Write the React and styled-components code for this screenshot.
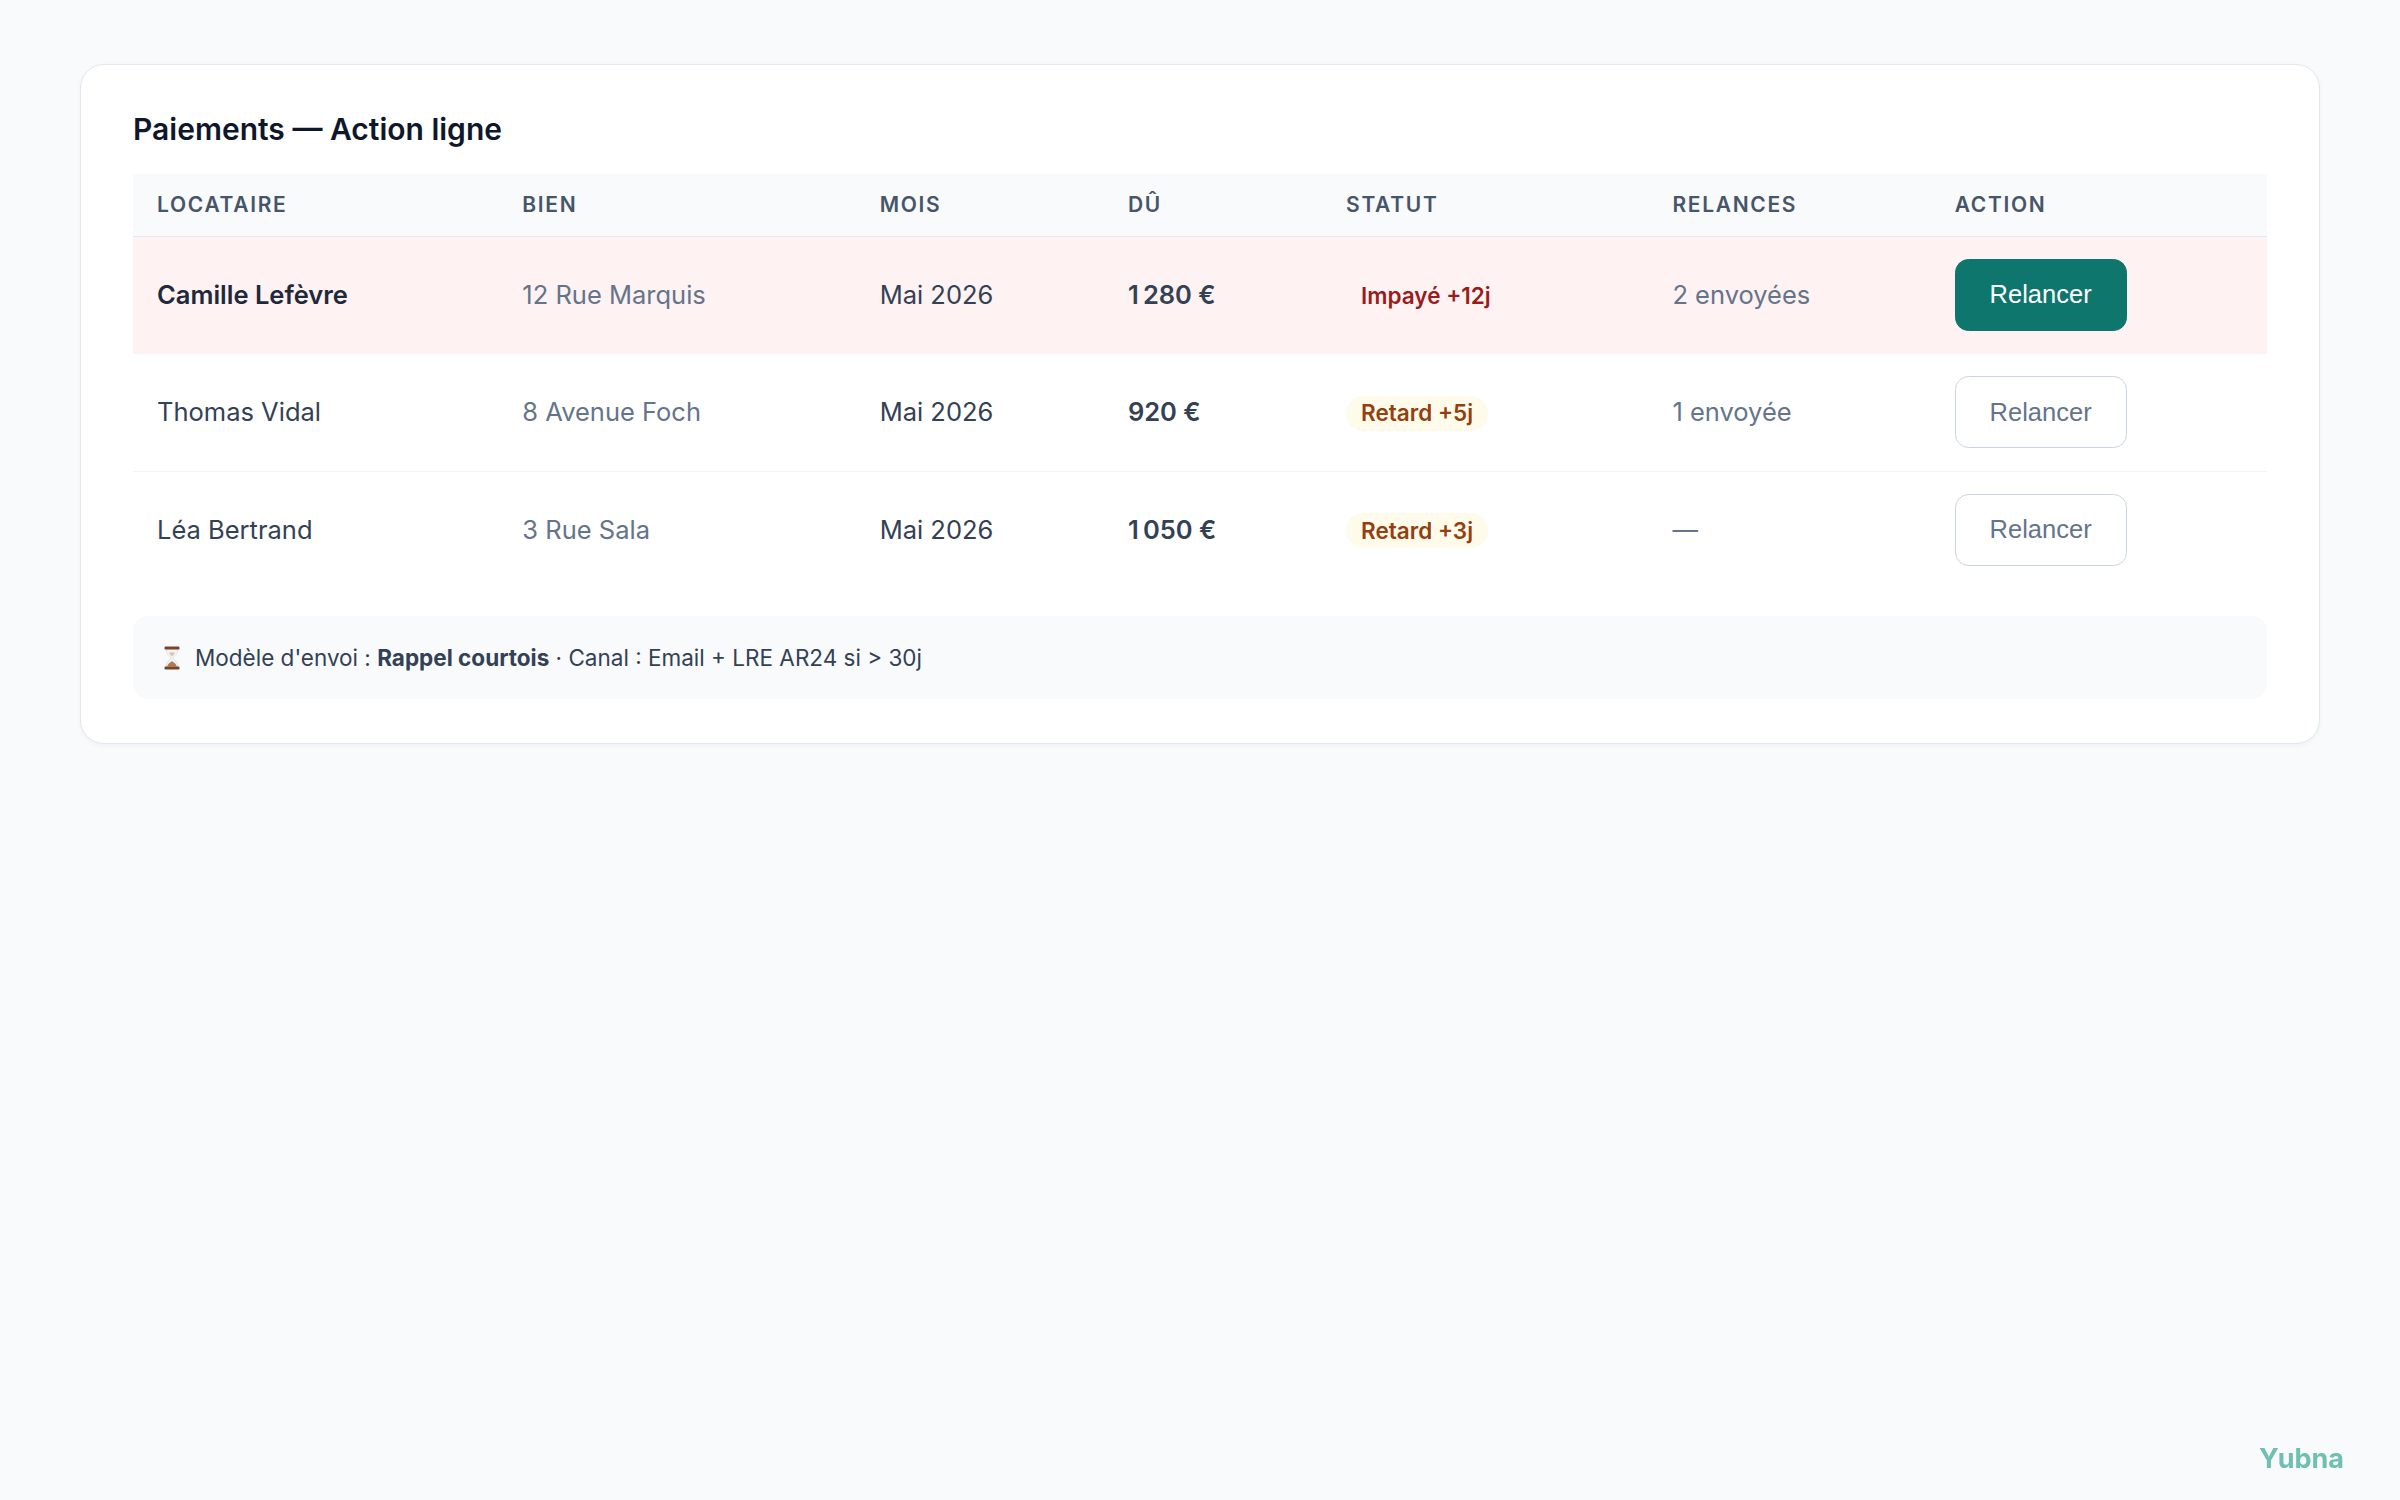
import styled, { createGlobalStyle } from "styled-components";

const GlobalStyle = createGlobalStyle`
  html, body {
    margin: 0;
    background: #f8fafc;
  }
  body {
    font-family: Inter, "Noto Sans", "Liberation Sans", sans-serif;
    color: #334155;
    min-height: 1500px;
  }
`;

const columns = [365, 357, 248, 218, 326, 282, 336];
const headers = ["Locataire", "Bien", "Mois", "Dû", "Statut", "Relances", "Action"];

const payments = [
  {
    tenant: "Camille Lefèvre",
    property: "12 Rue Marquis",
    month: "Mai 2026",
    due: "1\u202f280\u00a0€",
    status: "Impayé +12j",
    tone: "danger",
    reminders: "2 envoyées",
  },
  {
    tenant: "Thomas Vidal",
    property: "8 Avenue Foch",
    month: "Mai 2026",
    due: "920\u00a0€",
    status: "Retard +5j",
    tone: "warning",
    reminders: "1 envoyée",
  },
  {
    tenant: "Léa Bertrand",
    property: "3 Rue Sala",
    month: "Mai 2026",
    due: "1\u202f050\u00a0€",
    status: "Retard +3j",
    tone: "warning",
    reminders: "—",
  },
];

function Hourglass() {
  return (
    <svg width="18" height="24" viewBox="0 0 18 24" aria-hidden="true">
      <path d="M3 3 C3 9 8 10 8 12 C8 14 3 15 3 21 L15 21 C15 15 10 14 10 12 C10 10 15 9 15 3 Z" fill="#f4f4f5" stroke="#d4d4d8" strokeWidth="0.6" />
      <path d="M4.2 20.6 C5 17 8 16.4 9 15 C10 16.4 13 17 13.8 20.6 Z" fill="#b07a50" />
      <path d="M6 6.5 L12 6.5 C11 8.5 9.6 9.6 9 10.4 C8.4 9.6 7 8.5 6 6.5 Z" fill="#c99468" opacity="0.55" />
      <rect x="1.5" y="0.5" width="15" height="3" rx="1.2" fill="#7a4526" />
      <rect x="1.5" y="20.5" width="15" height="3" rx="1.2" fill="#7a4526" />
    </svg>
  );
}

export default function App() {
  return (
    <Page>
      <GlobalStyle />
      <Card>
        <Title>Paiements — Action ligne</Title>
        <Table>
          <colgroup>
            {columns.map((w, i) => (
              <col key={i} style={{ width: w }} />
            ))}
          </colgroup>
          <thead>
            <tr>
              {headers.map((h) => (
                <Th key={h}>{h}</Th>
              ))}
            </tr>
          </thead>
          <tbody>
            {payments.map((p, i) => {
              const alert = p.tone === "danger";
              return (
                <Row key={p.tenant} $alert={alert} $last={i === payments.length - 1}>
                  <Td $strong={alert} $color={alert ? "#1e293b" : "#334155"}>
                    {p.tenant}
                  </Td>
                  <Td $color="#64748b">{p.property}</Td>
                  <Td>{p.month}</Td>
                  <Td $strong>{p.due}</Td>
                  <Td>
                    <Badge $tone={p.tone}>{p.status}</Badge>
                  </Td>
                  <Td $color="#64748b">{p.reminders}</Td>
                  <Td>
                    <ActionButton $primary={alert}>Relancer</ActionButton>
                  </Td>
                </Row>
              );
            })}
          </tbody>
        </Table>
        <Note>
          <Hourglass />
          <span>
            Modèle d'envoi : <b>Rappel courtois</b> · Canal : Email + LRE AR24 si &gt; 30j
          </span>
        </Note>
      </Card>
      <Brand>Yubna</Brand>
    </Page>
  );
}

const Page = styled.main`
  padding: 64px 80px;
`;

const Card = styled.section`
  background: #ffffff;
  border: 1.5px solid #e2e8f0;
  border-radius: 24px;
  padding: 46px 52px 43.5px;
  box-shadow: 0 1.5px 4px rgba(15, 23, 42, 0.04);
`;

const Title = styled.h2`
  margin: 0 0 27px;
  font-size: 30px;
  line-height: 36px;
  font-weight: 600;
  color: #0f172a;
`;

const Table = styled.table`
  width: 100%;
  table-layout: fixed;
  border-collapse: collapse;
`;

const Th = styled.th`
  padding: 15px 24px;
  background: #f8fafc;
  border-bottom: 1.5px solid #e2e8f0;
  text-align: left;
  font-size: 21px;
  line-height: 31.5px;
  font-weight: 600;
  letter-spacing: 0.08em;
  text-transform: uppercase;
  color: #475569;
`;

const Row = styled.tr`
  background: ${(p) => (p.$alert ? "#fef2f2" : "#ffffff")};
  border-bottom: 1.5px solid
    ${(p) => (p.$alert ? "#fef2f2" : p.$last ? "transparent" : "#f1f5f9")};
`;

const Td = styled.td`
  height: 116.5px;
  padding: 0 24px;
  font-size: 25.5px;
  line-height: 36px;
  font-weight: ${(p) => (p.$strong ? 600 : 400)};
  color: ${(p) => p.$color || "#334155"};
  white-space: nowrap;
`;

const Badge = styled.span`
  display: inline-flex;
  align-items: center;
  height: 35px;
  padding: 0 15px;
  border-radius: 999px;
  font-size: 22.5px;
  font-weight: 600;
  background: ${(p) => (p.$tone === "danger" ? "#fef2f2" : "#fffbeb")};
  color: ${(p) => (p.$tone === "danger" ? "#991b1b" : "#92400e")};
`;

const ActionButton = styled.button`
  display: inline-flex;
  align-items: center;
  justify-content: center;
  width: 172px;
  height: 72px;
  padding: 0;
  border-radius: 13.5px;
  border: 1.5px solid ${(p) => (p.$primary ? "#0f766e" : "#cbd5e1")};
  background: ${(p) => (p.$primary ? "#0f766e" : "#ffffff")};
  color: ${(p) => (p.$primary ? "#ffffff" : "#64748b")};
  font-family: "Liberation Sans", Arial, sans-serif;
  font-size: 25.5px;
  cursor: pointer;
`;

const Note = styled.div`
  display: flex;
  align-items: center;
  gap: 14px;
  margin-top: 27px;
  height: 83px;
  padding: 0 30px;
  border-radius: 15px;
  background: #f8fafc;
  font-size: 22.5px;
  color: #334155;

  b {
    font-weight: 700;
  }
`;

const Brand = styled.div`
  position: fixed;
  right: 56px;
  bottom: 28px;
  font-size: 27px;
  line-height: 1;
  font-weight: 700;
  color: #6fc0b3;
`;
